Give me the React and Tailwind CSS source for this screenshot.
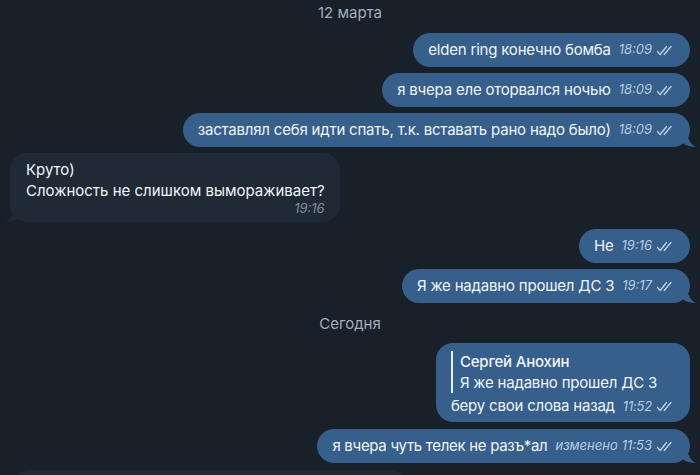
import React from "react";

const Checks = () => (
  <svg width="17" height="11" viewBox="0 0 17 11" fill="none" className="ml-1 shrink-0">
    <path d="M1.5 6.5 L4.2 9.5 L10.5 1.5" stroke="#c3d3e6" strokeWidth="1.3" strokeLinecap="round" strokeLinejoin="round" />
    <path d="M8.2 9.5 L15 1.5" stroke="#c3d3e6" strokeWidth="1.3" strokeLinecap="round" />
  </svg>
);

const OutTail = () => (
  <svg width="14" height="18" viewBox="0 0 14 18" className="absolute -right-[7px] bottom-0">
    <path d="M0 0 L4 0 C4 8 6 14 13 18 C8 18 3 17 0 14 Z" fill="#365f8b" />
  </svg>
);

const InTail = () => (
  <svg width="14" height="18" viewBox="0 0 14 18" className="absolute -left-[6px] bottom-0">
    <path d="M14 0 L10 0 C10 8 8 14 1 18 C6 18 11 17 14 14 Z" fill="#1f2a36" />
  </svg>
);

const Time = ({ t, edited }) => (
  <span className="ml-2 flex items-center text-[13px] italic text-[#b9cbe0]">
    {edited && <span className="mr-1">изменено</span>}
    {t}
    <Checks />
  </span>
);

const Out = ({ text, time, tail, edited, className = "", textClass = "" }) => (
  <div className="flex justify-end pr-[10px]">
    <div className={`relative flex h-[34px] items-center rounded-[17px] bg-[#365f8b] pl-[15px] pr-[17px] ${className}`}>
      <span className={`text-[15px] tracking-[-0.2px] text-[#f1f5f9] ${textClass}`}>{text}</span>
      <Time t={time} edited={edited} />
      {tail && <OutTail />}
    </div>
  </div>
);

const DateLabel = ({ children, className = "" }) => (
  <div className={`text-center text-[15px] text-[#a3afbd] ${className}`}>{children}</div>
);

export default function App() {
  return (
    <div
      className="h-[475px] w-[700px] overflow-hidden bg-[#18202a]"
      style={{ fontFamily: "Inter, 'Noto Sans', sans-serif" }}
    >
      <DateLabel className="h-[26px] leading-[26px]">12 марта</DateLabel>
      <div className="mt-[7px] flex flex-col gap-[6px]">
        <Out text="elden ring конечно бомба" time="18:09" />
        <Out text="я вчера еле оторвался ночью" time="18:09" />
        <Out text="заставлял себя идти спать, т.к. вставать рано надо было)" time="18:09" tail />
        <div className="flex pl-[10px]">
          <div className="relative flex h-[69px] flex-col rounded-[17px] bg-[#1f2a36] pl-[16px] pr-[15px] pt-[6px]">
            <span className="text-[15px] leading-[22px] text-[#f1f5f9]">Круто)</span>
            <span className="text-[15px] leading-[20px] text-[#f1f5f9]">Сложность не слишком вымораживает?</span>
            <span className="self-end text-[13px] italic leading-[14px] text-[#7f8c99]">19:16</span>
            <InTail />
          </div>
        </div>
        <Out text="Не" time="19:16" className="mt-[1px]" />
        <Out text="Я же надавно прошел ДС 3" time="19:17" tail />
      </div>
      <DateLabel className="mt-[9px] h-[24px] leading-[24px]">Сегодня</DateLabel>
      <div className="mt-[7px] flex flex-col gap-[7px]">
        <div className="flex justify-end pr-[10px]">
          <div className="flex h-[79px] flex-col rounded-[17px] bg-[#365f8b] pl-[15px] pr-[17px] pt-[8px] tracking-[-0.2px]">
            <div className="flex border-l-2 border-[#e9eef5] pl-[7px]">
              <div className="flex flex-col">
                <span className="text-[15px] font-medium leading-[21px] text-[#f1f5f9]">Сергей Анохин</span>
                <span className="text-[15px] leading-[21px] text-[#f1f5f9]">Я же надавно прошел ДС 3</span>
              </div>
            </div>
            <div className="mt-[2px] flex items-center">
              <span className="text-[15px] text-[#f1f5f9]">беру свои слова назад</span>
              <Time t="11:52" />
            </div>
          </div>
        </div>
        <Out text="я вчера чуть телек не разъ*ал" time="11:53" edited tail textClass="tracking-[-0.3px]" />
        <div className="flex pl-[13px]">
          <div className="h-[40px] w-[395px] rounded-[17px] bg-[#1f2a36]" />
        </div>
      </div>
    </div>
  );
}
